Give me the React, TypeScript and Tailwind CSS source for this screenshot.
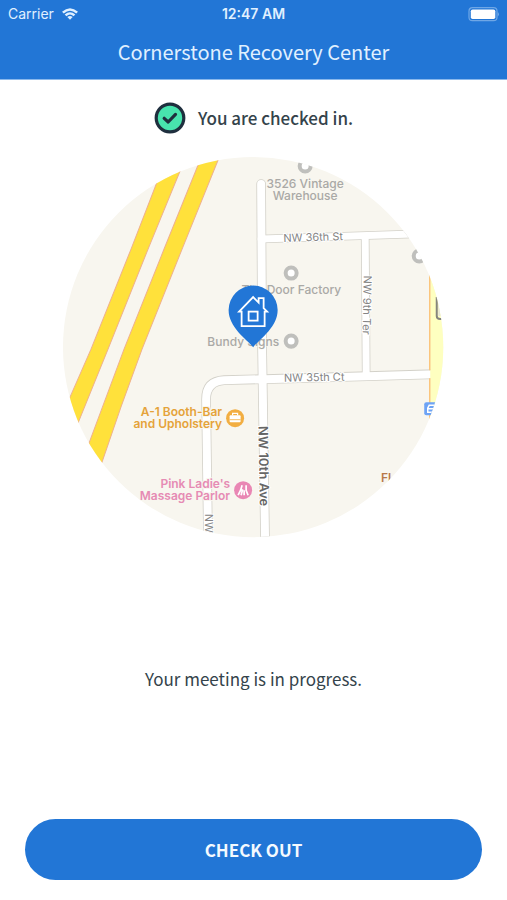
import { useState } from 'react';

const MAIN_FONT = "font-['Noto_Sans_CJK_SC','Noto_Sans',sans-serif]";

interface Street {
  id: string;
  d: string;
  width: number;
}

const STREETS: Street[] = [
  { id: '10th', d: 'M262 185 L263 350 L266 545', width: 8 },
  { id: '36th', d: 'M262 240 L440 234', width: 7 },
  { id: '9th', d: 'M366 240 L367 377', width: 7 },
  { id: '35th', d: 'M436 375 L266 380 L225 381 Q207 382 207 400 L209 545', width: 8 },
];

const HIGHWAYS = [
  'M171 150 L158 183 L132 250 L92 350 L71 398 L50 450 L68 450 L79 424 L109 350 L149 250 L181 172 L190 150 Z',
  'M205 150 L199 166 L165 250 L125 350 L90 444 L76 480 L96 480 L103 463 Q122 406 143 350 L183 250 L219 161 L224 150 Z',
];

const RINGS = [
  [306, 167],
  [292, 274],
  [292, 342],
  [420, 257],
];

function StatusBar() {
  return (
    <div className="grid grid-cols-3 items-center px-2 pt-1 font-['Inter',sans-serif] text-[14px] leading-5">
      <div className="flex items-center gap-2">
        <span>Carrier</span>
        <svg viewBox="0 0 18 13" className="h-3 w-4" aria-hidden="true">
          <path d="M0 4 Q9 -4 18 4 L16 6 Q9 -0.4 2 6 Z" fill="currentColor" />
          <path d="M3 7 Q9 1.8 15 7 L13 9 Q9 5.2 5 9 Z" fill="currentColor" />
          <path d="M6 10 Q9 7.4 12 10 L9 13 Z" fill="currentColor" />
        </svg>
      </div>
      <span className="text-center font-semibold">12:47 AM</span>
      <svg viewBox="0 0 32 15" className="h-[15px] w-8 justify-self-end" aria-hidden="true">
        <rect x="2" y="0.7" width="28" height="13" rx="3.5" fill="none" stroke="#6fa7e6" strokeWidth="1.2" />
        <rect x="3.8" y="2.5" width="24.5" height="9.5" rx="1.8" fill="#fff" />
        <path d="M30.8 5 Q32.6 7.2 30.8 9.5 Z" fill="#8ab8ec" />
      </svg>
    </div>
  );
}

function CheckBadge() {
  return (
    <svg viewBox="0 0 32 32" className="size-8 shrink-0" aria-hidden="true">
      <circle cx="16" cy="16" r="13.8" fill="#48e4ae" stroke="#1f2f3e" strokeWidth="3.2" />
      <path
        d="M10.2 16.3 L14.2 20 L21.5 12.4"
        fill="none"
        stroke="#1f2f3e"
        strokeWidth="3.2"
        strokeLinecap="round"
        strokeLinejoin="round"
      />
    </svg>
  );
}

function MeetingMap() {
  return (
    <svg
      viewBox="64 157 380 382"
      role="img"
      aria-label="Map of the meeting location"
      className="w-3/4 font-['Inter',sans-serif]"
    >
      <defs>
        <clipPath id="map-circle">
          <circle cx="254" cy="348" r="190" />
        </clipPath>
      </defs>
      <g clipPath="url(#map-circle)">
        <rect x="60" y="150" width="390" height="400" fill="#f8f6ef" />
        {HIGHWAYS.map(d => (
          <path key={d} d={d} fill="#ffe13b" stroke="#efb18c" strokeWidth="1" />
        ))}

        {/* Casings first so the junctions stay open */}
        <g fill="none" stroke="#d3d1c9" strokeLinecap="round">
          {STREETS.map(s => (
            <path key={s.id} d={s.d} strokeWidth={s.width + 1.6} />
          ))}
        </g>
        <g fill="none" stroke="#fff" strokeLinecap="round">
          {STREETS.map(s => (
            <path key={s.id} d={s.d} strokeWidth={s.width} />
          ))}
        </g>

        {/* Area east of the block */}
        <rect x="431" y="260" width="20" height="160" fill="#feffc0" />
        <path d="M430.5 260 V371 M430.5 379 V421" stroke="#fbc57c" strokeWidth="1.5" />

        <g fill="#fff" stroke="#bfbfbc" strokeWidth="4">
          {RINGS.map(([cx, cy]) => (
            <circle key={`${cx}-${cy}`} cx={cx} cy={cy} r="5.5" />
          ))}
        </g>

        {/* Street names */}
        <g fontSize="11" fill="#858585" stroke="#fff" strokeWidth="2" paintOrder="stroke" textAnchor="middle">
          <text x="314" y="242" transform="rotate(-2 314 238)">NW 36th St</text>
          <text x="315" y="382" transform="rotate(-1 315 378)">NW 35th Ct</text>
          <text transform="translate(364 306) rotate(91)">NW 9th Ter</text>
          <text transform="translate(206 524) rotate(90)">NW</text>
          <text transform="translate(260 467) rotate(89)" fontSize="13" fontWeight="600" fill="#666">
            NW 10th Ave
          </text>
        </g>

        {/* Places */}
        <g fontSize="12" fontWeight="500" fill="#aaa9a6" stroke="#f8f6ef" strokeWidth="1" paintOrder="stroke">
          <text textAnchor="middle">
            <tspan x="306" y="189">3526 Vintage</tspan>
            <tspan x="306" y="201">Warehouse</tspan>
          </text>
          <text x="342" y="295" textAnchor="end">The Door Factory</text>
          <text x="280" y="347" textAnchor="end">Bundy Signs</text>
        </g>
        <g fontSize="12" fontWeight="600" textAnchor="end" stroke="#f8f6ef" strokeWidth="2" paintOrder="stroke">
          <text fill="#e5a33a">
            <tspan x="223" y="417">A-1 Booth-Bar</tspan>
            <tspan x="223" y="429">and Upholstery</tspan>
          </text>
          <text fill="#e68bb4">
            <tspan x="231" y="489">Pink Ladie's</tspan>
            <tspan x="231" y="501">Massage Parlor</tspan>
          </text>
          <text x="392" y="483" fill="#b87948">Fl</text>
        </g>

        <circle cx="236" cy="419" r="9" fill="#f2ae42" />
        <path d="M233.5 416 V414.2 H238.5 V416" fill="none" stroke="#fff" strokeWidth="1.2" />
        <rect x="230.5" y="416" width="11" height="7" rx="1" fill="#fff" />
        <path d="M230.5 420.5 H241.5" stroke="#f2ae42" strokeWidth="0.8" />

        <circle cx="244" cy="491" r="9" fill="#e987b4" />
        <path
          d="M239 496 L241.5 491 L243 486 M242 496 L243.5 490 M247 486 V491 L249 496 M245 491 V496"
          fill="none"
          stroke="#fff"
          strokeWidth="1.7"
        />

        <rect x="425" y="403" width="16" height="13" rx="2" fill="#6da3f5" />
        <path d="M438 406 H430 L428.5 409 V413 H434 M429 409.5 H436" fill="none" stroke="#fff" strokeWidth="1.5" />
        <path d="M437.5 298 V317 Q437.5 320 441 320 H445" fill="none" stroke="#85857e" strokeWidth="2" />
        <path d="M440 300 V316 H445" fill="none" stroke="#e6e6d8" strokeWidth="2" />
      </g>

      {/* Meeting pin */}
      <path
        d="M254 348 C247 340 229.5 328 229.5 311 A24.5 24.5 0 0 1 278.5 311 C278.5 328 261 340 254 348 Z"
        fill="#2276d6"
      />
      <g fill="none" stroke="#fff" strokeWidth="1.8">
        <path d="M242.5 312.5 H240 L254 298 L259.5 303.5 V299 H264.5 V309 L268 312.5 H265.5 V327 H242.5 Z" />
        <rect x="249.5" y="312.5" width="9" height="9" />
      </g>
    </svg>
  );
}

export default function App() {
  const [checkedIn, setCheckedIn] = useState(true);

  return (
    <div className={`flex min-h-screen flex-col bg-white text-[#34434b] ${MAIN_FONT}`}>
      <header className="border-b border-[#8ab8ec] bg-[#2276d6] pb-2.5 text-[#e0f0ff]">
        <StatusBar />
        <h1 className="mt-2.5 text-center text-[20px] leading-[35px] font-normal">Cornerstone Recovery Center</h1>
      </header>

      <main className="flex flex-1 flex-col items-center">
        <div className="mt-[22px] flex items-center gap-3">
          {checkedIn && <CheckBadge />}
          <p className="text-[17px] leading-8 font-medium">
            {checkedIn ? 'You are checked in.' : 'You are checked out.'}
          </p>
        </div>
        <div className="mt-[22px] flex w-full justify-center">
          <MeetingMap />
        </div>
        <p className="my-auto text-[17px] leading-8">Your meeting is in progress.</p>
      </main>

      <footer className="px-[25px] pb-5">
        <button
          type="button"
          onClick={() => setCheckedIn(false)}
          className="h-[61px] w-full rounded-full bg-[#2276d6] text-[17px] font-bold text-[#f4faff]"
        >
          CHECK OUT
        </button>
      </footer>
    </div>
  );
}
